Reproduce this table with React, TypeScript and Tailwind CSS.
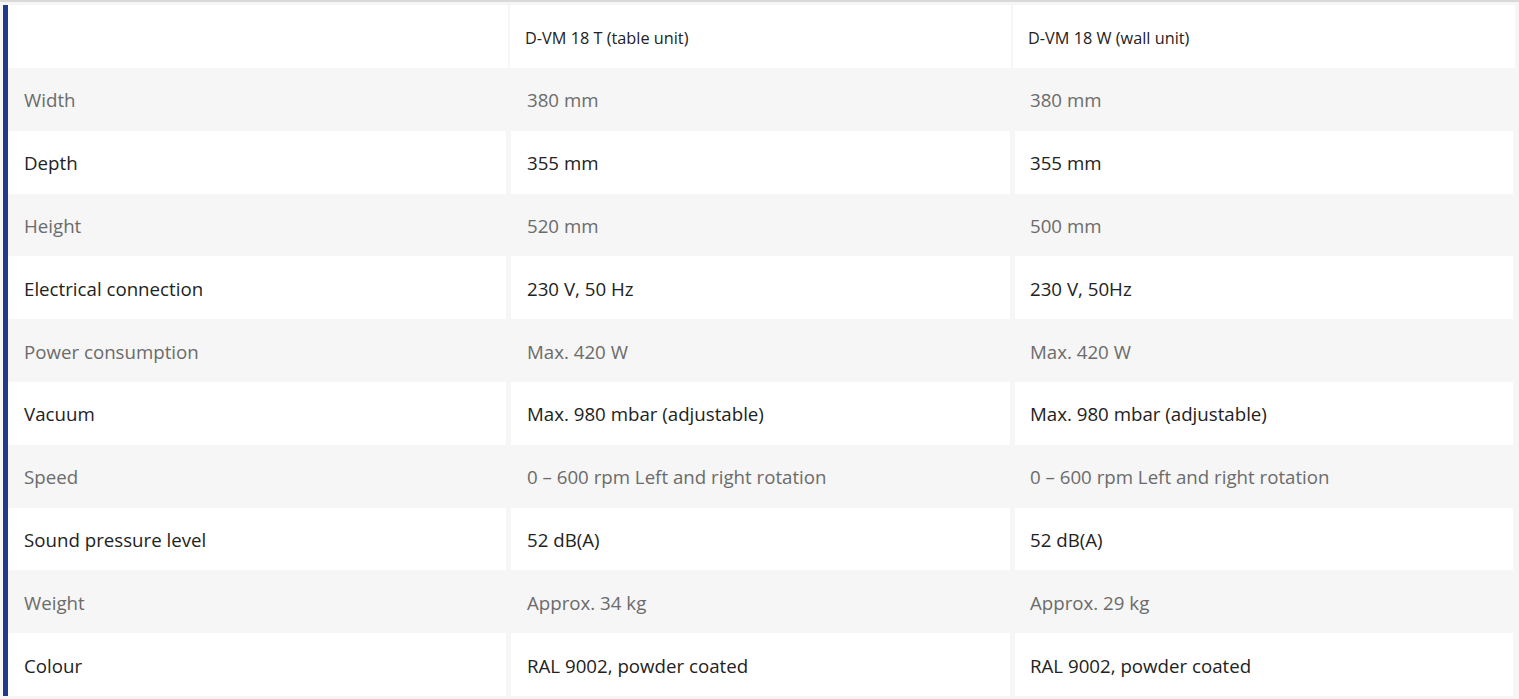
const rows: [string, string, string][] = [
  ["Width", "380 mm", "380 mm"],
  ["Depth", "355 mm", "355 mm"],
  ["Height", "520 mm", "500 mm"],
  ["Electrical connection", "230 V, 50 Hz", "230 V, 50Hz"],
  ["Power consumption", "Max. 420 W", "Max. 420 W"],
  ["Vacuum", "Max. 980 mbar (adjustable)", "Max. 980 mbar (adjustable)"],
  ["Speed", "0 – 600 rpm Left and right rotation", "0 – 600 rpm Left and right rotation"],
  ["Sound pressure level", "52 dB(A)", "52 dB(A)"],
  ["Weight", "Approx. 34 kg", "Approx. 29 kg"],
  ["Colour", "RAL 9002, powder coated", "RAL 9002, powder coated"],
]

export default function App() {
  return (
    <div className="min-h-screen bg-[#f6f6f6] border-t-2 border-[#d9d9d9] font-['Open_Sans',sans-serif]">
      <div className="ml-[3px] mt-[3px] mr-[4px] border-l-[5px] border-[#213a8c]">
        <div className="grid grid-cols-[500px_501px_502px] gap-x-[2px] h-[63px] text-[16.3px] text-[#222]">
          <div className="bg-white" />
          <div className="bg-white flex items-center pl-[15px] pt-[3px]">D-VM 18 T (table unit)</div>
          <div className="bg-white flex items-center pl-[15px] pt-[3px]">D-VM 18 W (wall unit)</div>
        </div>
        {rows.map(([label, a, b], i) => {
          const odd = i % 2 === 0
          return (
            <div
              key={label}
              className={
                odd
                  ? "grid grid-cols-[498px_499px_498px] gap-x-[5px] h-[62.8px] text-[18.7px] text-[#6b6b6b]"
                  : "grid grid-cols-[498px_499px_498px] gap-x-[5px] h-[62.8px] text-[18.7px] text-[#222]"
              }
            >
              <div className={odd ? "flex items-center pl-[16px] pt-[2px]" : "bg-white flex items-center pl-[16px] pt-[2px]"}>{label}</div>
              <div className={odd ? "flex items-center pl-[16px] pt-[2px]" : "bg-white flex items-center pl-[16px] pt-[2px]"}>{a}</div>
              <div className={odd ? "flex items-center pl-[15px] pt-[2px]" : "bg-white flex items-center pl-[15px] pt-[2px]"}>{b}</div>
            </div>
          )
        })}
      </div>
    </div>
  )
}
